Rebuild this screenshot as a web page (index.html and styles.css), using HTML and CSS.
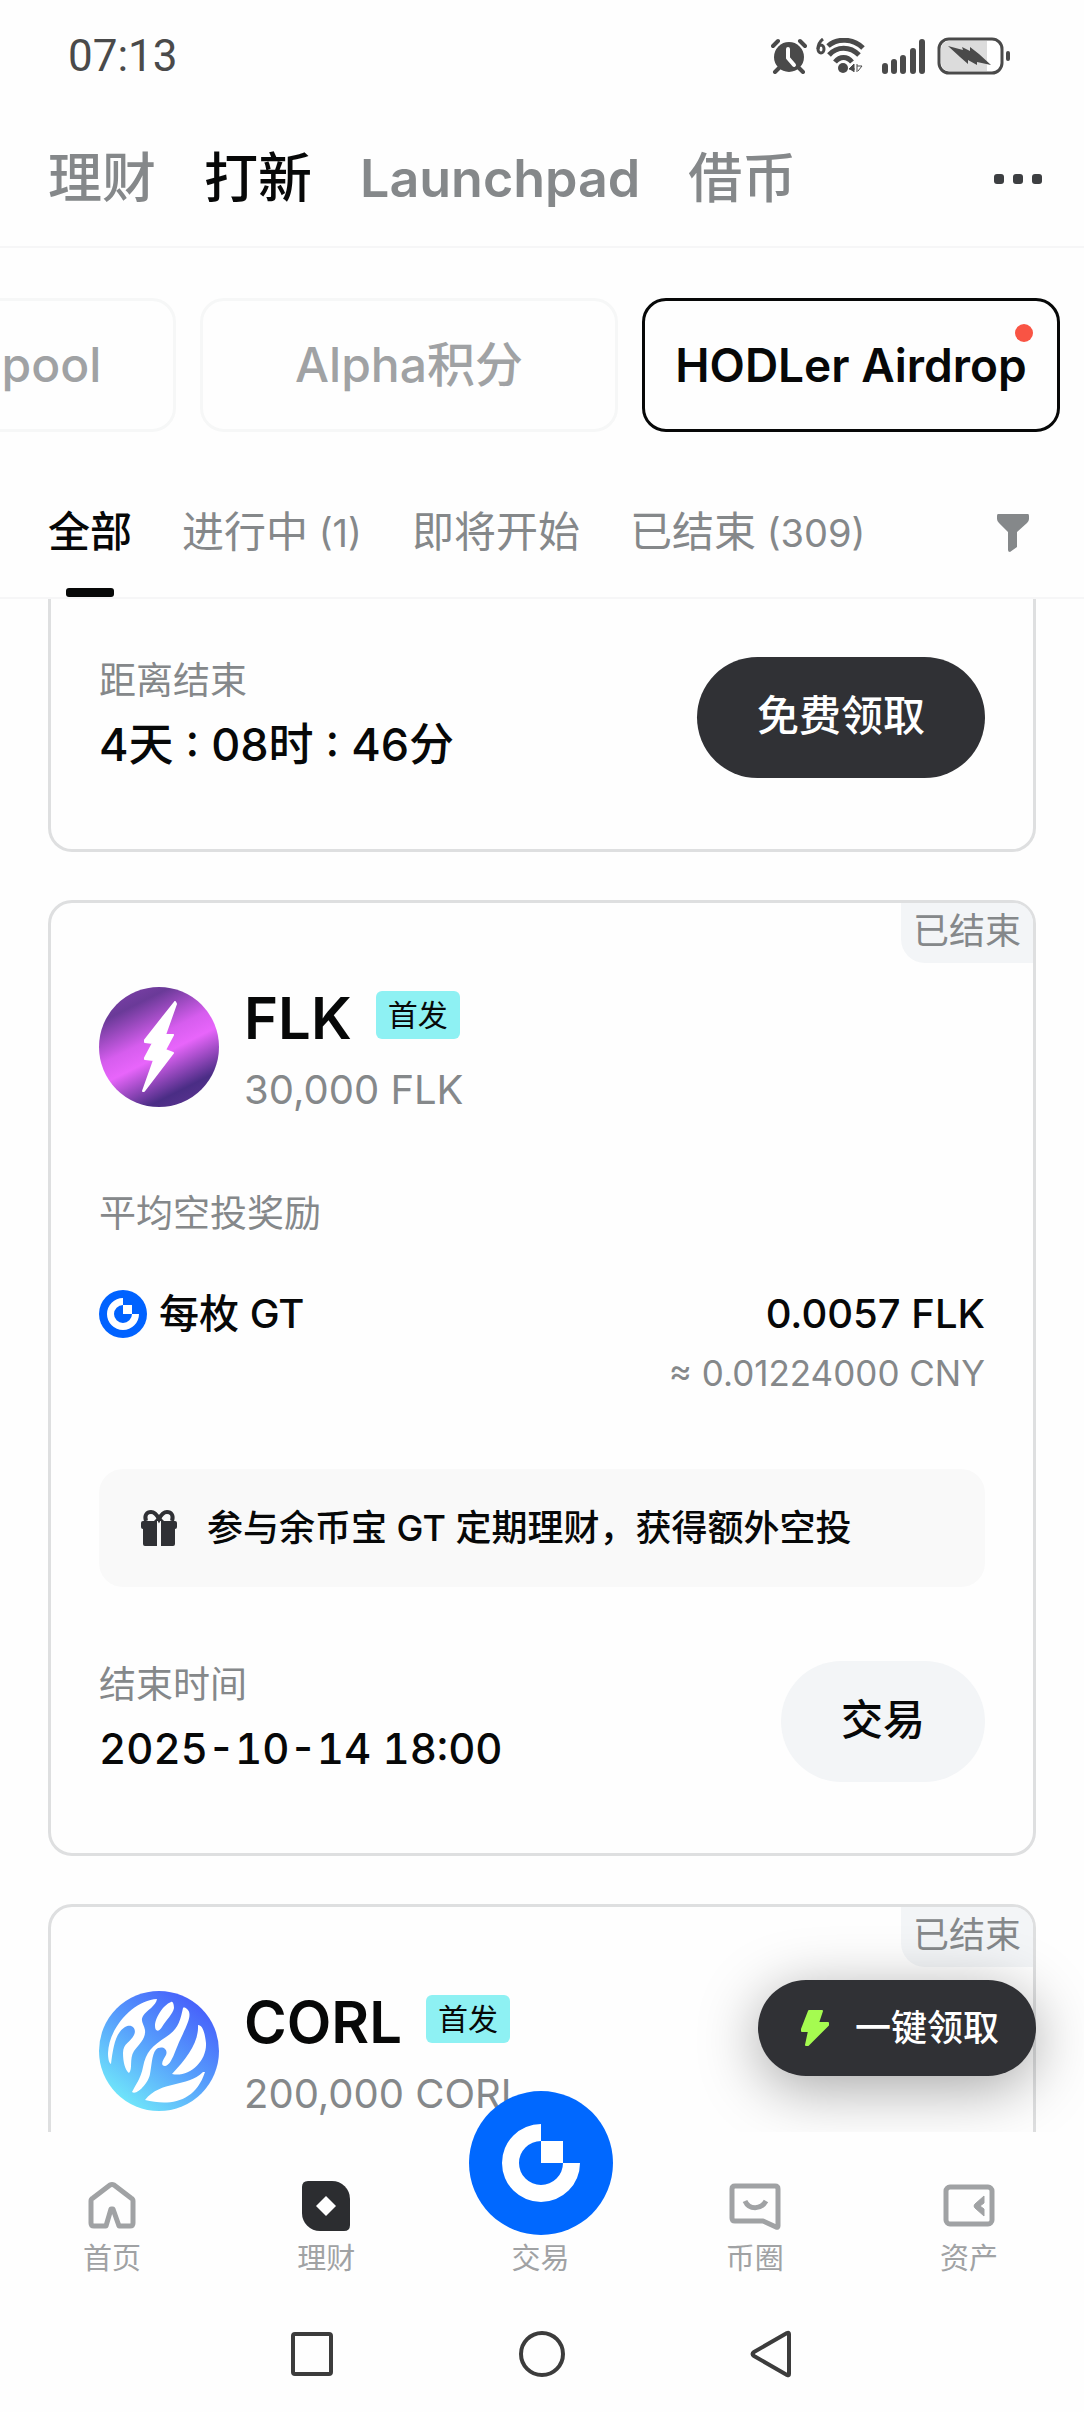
FILE: index.html
```html
<!DOCTYPE html>
<html lang="zh-CN">

<head>
  <meta charset="UTF-8" />
  <meta name="viewport" content="width=device-width, initial-scale=1.0" />
  <title>HODLer Airdrop</title>
  <link rel="stylesheet" href="styles.css">
</head>

<body>
  <div class="status-bar">
    <span class="time">07:13</span>
    <div class="status-icons">
      <svg width="36" height="36" viewBox="0 0 36 36">
        <circle cx="18" cy="19" r="15" fill="#4a4a4a" />
        <path d="M2 8l5-5M34 8l-5-5M8 30l-4 4M28 30l4 4" stroke="#4a4a4a" stroke-width="4" stroke-linecap="round" />
        <path d="M17 11v9l6 7" fill="none" stroke="#fff" stroke-width="4" stroke-linecap="round" stroke-linejoin="round" />
      </svg>
      <svg class="wifi" width="50" height="36" viewBox="0 0 50 36">
        <path d="M7 1C3 4 2 7 2 11" fill="none" stroke="#4a4a4a" stroke-width="3" />
        <ellipse cx="5" cy="11" rx="3" ry="4" fill="none" stroke="#4a4a4a" stroke-width="3" />
        <g fill="none" stroke="#4a4a4a" stroke-width="5">
          <path d="M12 8C21 0 37 0 47 10" />
          <path d="M13 17C21 8 34 8 43 17" />
          <path d="M19 24C24 18 31 18 36 24" />
        </g>
        <circle cx="27" cy="30" r="5" fill="#4a4a4a" />
        <path d="M33 31l5-5v8M33 31h6M41 26v8M46 28h-5M46 28l-4 5" fill="#4a4a4a" stroke="#4a4a4a" stroke-width="1" />
      </svg>
      <svg class="signal" width="44" height="36" viewBox="0 0 44 36">
        <path d="M3 28v5M12 24v9M21 20v13M31 13v20M40 4v29" stroke="#4a4a4a" stroke-width="6" stroke-linecap="round" />
      </svg>
      <svg class="battery" width="74" height="38" viewBox="0 0 74 38">
        <rect x="2" y="2" width="63" height="34" rx="10" fill="#fff" stroke="#4a4a4a" stroke-width="3" />
        <path d="M12 4h38v30H12a8 8 0 0 1-8-8V12a8 8 0 0 1 8-8z" fill="#dcdcdc" />
        <path d="M11 9l15 4-1-3 8 4v-4l9 7 12 11-14-3v3l-9-5v4l-8-7z" fill="#4a4a4a" />
        <rect x="69" y="14" width="4" height="10" rx="2" fill="#4a4a4a" />
      </svg>
    </div>
  </div>

  <header class="header">
    <nav class="main-tabs">
      <a href="#">理财</a>
      <a href="#" class="active">打新</a>
      <a href="#" class="latin">Launchpad</a>
      <a href="#">借币</a>
    </nav>
    <button class="more" aria-label="更多">
      <svg width="50" height="12" viewBox="0 0 50 12" fill="#3d3f42">
        <rect x="0" y="1" width="10" height="10" rx="3" />
        <rect x="19" y="1" width="10" height="10" rx="3" />
        <rect x="38" y="1" width="10" height="10" rx="3" />
      </svg>
    </button>
  </header>

  <div class="chips">
    <button class="chip">Launchpool</button>
    <button class="chip">Alpha积分</button>
    <button class="chip active">HODLer Airdrop<span class="dot"></span></button>
  </div>

  <div class="filters">
    <button class="filter active">全部</button>
    <button class="filter"><span>进行中<span class="count"> (1)</span></span></button>
    <button class="filter">即将开始</button>
    <button class="filter"><span>已结束<span class="count"> (309)</span></span></button>
    <button class="filter-icon" aria-label="筛选">
      <svg width="34" height="40" viewBox="0 0 34 40">
        <path d="M2 1h30q1 0 1 2v3q0 2-2 4L21 19v15l-7 5q-2 0-2-2V19L3 10Q1 8 1 6V3q0-2 1-2z" fill="#85888a" />
      </svg>
    </button>
  </div>

  <main class="list">
    <section class="card card-first">
      <div class="card-foot">
        <div class="period">
          <div class="label">距离结束</div>
          <div class="value">4天 : 08时 : 46分</div>
        </div>
        <button class="btn btn-dark">免费领取</button>
      </div>
    </section>

    <section class="card">
      <span class="badge">已结束</span>
      <div class="card-head">
        <svg width="120" height="120" viewBox="0 0 120 120">
          <defs>
            <linearGradient id="flk" x1="0.25" y1="0" x2="0.75" y2="1">
              <stop offset="0" stop-color="#7a3fa6" />
              <stop offset="0.14" stop-color="#6a3a98" />
              <stop offset="0.42" stop-color="#d65dee" />
              <stop offset="0.56" stop-color="#e865fb" />
              <stop offset="0.86" stop-color="#4a2d85" />
              <stop offset="1" stop-color="#59338f" />
            </linearGradient>
          </defs>
          <circle cx="60" cy="60" r="60" fill="url(#flk)" />
          <path d="M76 15L46 53v2l8 1-8 15v1l9 1-11 31h1l29-38-8-3 8-15h-8l11-31z" fill="#fff" stroke="#fff" stroke-width="2" stroke-linejoin="round" />
        </svg>
        <div>
          <div class="name-row">
            <h2>FLK</h2>
            <span class="tag">首发</span>
          </div>
          <div class="amount">30,000 FLK</div>
        </div>
      </div>

      <div class="label reward-label">平均空投奖励</div>
      <div class="reward">
        <div class="token">
          <svg width="48" height="48" viewBox="0 0 48 48">
            <circle cx="24" cy="24" r="24" fill="#0062ff" />
            <path d="M24 8a16 16 0 1 0 16 16h-7a9 9 0 1 1-9-9z" fill="#fff" />
            <path d="M24 15h9v9h-9z" fill="#fff" />
          </svg>
          每枚 GT
        </div>
        <div class="reward-value">0.0057 FLK</div>
      </div>
      <div class="fiat">≈ 0.01224000 CNY</div>

      <div class="notice">
        <svg width="36" height="36" viewBox="0 0 36 36">
          <path d="M5 11C3 5 6 2 10 2c4 0 6 3 8 7 2-4 4-7 8-7s7 3 5 9" fill="none" stroke="#303135" stroke-width="4" />
          <path d="M13 11l4-4h2l4 4" fill="#303135" />
          <path d="M2 11h14v25H4q-2 0-2-2V19q-2 0-2-2v-4q0-2 2-2zM20 11h14q2 0 2 2v4q0 2-2 2v15q0 2-2 2H20z" fill="#303135" />
        </svg>
        <span>参与余币宝 GT 定期理财，获得额外空投</span>
      </div>

      <div class="card-foot">
        <div class="period">
          <div class="label">结束时间</div>
          <div class="value date">2025-10-14 18:00</div>
        </div>
        <button class="btn btn-light">交易</button>
      </div>
    </section>

    <section class="card">
      <span class="badge">已结束</span>
      <div class="card-head">
        <svg width="120" height="120" viewBox="0 0 120 120">
          <defs>
            <linearGradient id="corl" x1="0.8" y1="0.1" x2="0.2" y2="0.9">
              <stop offset="0" stop-color="#4762fb" />
              <stop offset="0.5" stop-color="#579ffc" />
              <stop offset="1" stop-color="#6fe4fa" />
            </linearGradient>
          </defs>
          <circle cx="60" cy="60" r="60" fill="url(#corl)" />
          <g fill="#fff">
            <path d="M58 8C35 9 10 36 9 62c0 6 1 10 3 11 2-15 4-31 14-37 7-4 12 2 9 8-3 7-11 8-11 18 0 9 2 17 6 20 4-4 0-14 5-22 5-7 12-12 11-21-1-6-5-9-2-14 4-6 13-10 14-17z" />
            <path d="M72 11c-8 3-16 16-16 24 0 6 4 6 7 1 4-7 11-13 12-19 0-3-1-7-3-6z" />
            <path d="M84 17c-3 14-5 21-17 29-14 9-20 15-23 30-2 11-8 19-11 25 5 4 17-10 18-18 2-11 2-23 8-26 6-2 10 2 8 7-2 4-7 10-1 11 7-1 10-16 16-28 6-13 12-24 6-29-1-1-3-2-4-1z" />
            <path d="M99 34c1 17-11 33-26 49 16 4 35-12 34-31-1-9-3-18-8-18z" />
            <path d="M104 81C88 97 62 89 46 109c24 6 50 3 60-28z" />
          </g>
        </svg>
        <div>
          <div class="name-row">
            <h2>CORL</h2>
            <span class="tag">首发</span>
          </div>
          <div class="amount">200,000 CORL</div>
        </div>
      </div>
    </section>

    <button class="claim-all">
      <svg width="28" height="36" viewBox="0 0 28 36">
        <path d="M8 1h13l-4 12h10v2L7 35H5l3-14H1v-2z" fill="#a5fb50" stroke="#a5fb50" stroke-width="2" stroke-linejoin="round" />
      </svg>
      一键领取
    </button>
  </main>

  <nav class="tabbar">
    <a href="#">
      <svg width="52" height="52" viewBox="0 0 52 52">
        <path d="M20 46H8q-3 0-3-3V21q0-2 2-3L24 5q2-1 4 0l17 13q2 1 2 3v22q0 3-3 3H33L27 29h-2z" fill="none" stroke="#a0a2a4" stroke-width="5" stroke-linejoin="round" />
      </svg>
      首页
    </a>
    <a href="#">
      <svg width="52" height="52" viewBox="0 0 52 52">
        <path d="M8 1h24a18 18 0 0 1 18 18v26q0 6-6 6H20A18 18 0 0 1 2 33V7q0-6 6-6z" fill="#2c2d30" />
        <path d="M26 16l10 10-10 10-10-10z" fill="#fff" />
      </svg>
      理财
    </a>
    <a href="#">
      <svg class="trade" width="144" height="144" viewBox="0 0 144 144">
        <circle cx="72" cy="72" r="72" fill="#0068ff" />
        <path d="M72 33a39 39 0 1 0 39 39H94a22 22 0 1 1-22-22z" fill="#fff" />
        <path d="M72 50h22v22H72z" fill="#fff" />
      </svg>
      交易
    </a>
    <a href="#">
      <svg width="52" height="52" viewBox="0 0 52 52">
        <path d="M6 6h40q3 0 3 3v37q0 2-2 1L34 41H6q-3 0-3-3V9q0-3 3-3z" fill="none" stroke="#a0a2a4" stroke-width="5" stroke-linejoin="round" />
        <path d="M16 21c4 9 16 9 21 0" fill="none" stroke="#a0a2a4" stroke-width="5" />
      </svg>
      币圈
    </a>
    <a href="#">
      <svg width="52" height="52" viewBox="0 0 52 52">
        <rect x="3" y="7" width="46" height="37" rx="4" fill="none" stroke="#a0a2a4" stroke-width="5" />
        <path d="M41 16v7l-4 3 4 3v7l-9-8q-2-2 0-4z" fill="#a0a2a4" stroke="#a0a2a4" stroke-width="1" />
      </svg>
      资产
    </a>
  </nav>

  <div class="system-nav">
    <button aria-label="最近任务">
      <svg width="52" height="52" viewBox="0 0 52 52">
        <rect x="7" y="6" width="38" height="40" rx="2" fill="none" stroke="#3c3c3c" stroke-width="4" />
      </svg>
    </button>
    <button aria-label="主屏幕">
      <svg width="52" height="52" viewBox="0 0 52 52">
        <circle cx="26" cy="26" r="21" fill="none" stroke="#3c3c3c" stroke-width="4" />
      </svg>
    </button>
    <button aria-label="返回">
      <svg width="52" height="52" viewBox="0 0 52 52">
        <path d="M43 6v40q0 2-2 1L8 28q-3-2 0-4L41 5q2-1 2 1z" fill="none" stroke="#3c3c3c" stroke-width="4" stroke-linejoin="round" />
      </svg>
    </button>
  </div>
</body>

</html>
```
FILE: styles.css
```css
* {
  box-sizing: border-box;
}

body {
  margin: 0;
  height: 100vh;
  display: flex;
  flex-direction: column;
  background: #fefefe;
  color: #070808;
  font-family: Inter, "Noto Sans CJK SC", sans-serif;
}

button {
  padding: 0;
  border: none;
  background: none;
  color: inherit;
  font: inherit;
  white-space: nowrap;
  cursor: pointer;
}

a {
  color: inherit;
  text-decoration: none;
}

svg {
  display: block;
  flex: none;
}

/* status bar */
.status-bar {
  display: flex;
  align-items: center;
  justify-content: space-between;
  height: 112px;
  padding: 0 73px 0 68px;
}

.time {
  font-family: Roboto, sans-serif;
  font-size: 44px;
  line-height: 56px;
  color: #4a4a4a;
}

.status-icons {
  display: flex;
  align-items: center;
}

.wifi {
  margin-left: 9px;
}

.signal {
  margin-left: 16px;
}

.battery {
  margin-left: 11px;
}

/* header */
.header {
  display: flex;
  align-items: center;
  justify-content: space-between;
  padding: 35px 40px 35px 48px;
  border-bottom: 2px solid #f6f6f7;
}

.main-tabs {
  display: flex;
  gap: 48px;
  font-size: 54px;
  line-height: 64px;
  font-weight: 500;
  color: #85888a;
}

.main-tabs .active {
  color: #070808;
}

.main-tabs .latin {
  font-size: 52px;
  font-weight: 600;
}

/* product chips */
.chips {
  display: flex;
  justify-content: flex-end;
  gap: 24px;
  padding: 50px 24px 70px;
  overflow: hidden;
}

.chip {
  position: relative;
  flex: 0 0 418px;
  height: 134px;
  border: 3px solid #f6f7f7;
  border-radius: 24px;
  font-size: 48px;
  line-height: 60px;
  font-weight: 500;
  color: #a0a2a4;
}

.chip.active {
  border-color: #070808;
  color: #070808;
  font-size: 46px;
  font-weight: 600;
}

.dot {
  position: absolute;
  top: 23px;
  right: 24px;
  width: 18px;
  height: 18px;
  border-radius: 50%;
  background: #f95444;
}

/* status filters */
.filters {
  display: flex;
  align-items: flex-start;
  gap: 50px;
  padding: 0 54px 0 48px;
  border-bottom: 2px solid #f6f6f7;
}

.filter {
  display: flex;
  flex-direction: column;
  align-items: center;
  gap: 26px;
  font-size: 42px;
  line-height: 60px;
  color: #85888a;
}

.count {
  font-size: 38px;
}

.filter.active {
  color: #070808;
  font-weight: 500;
}

.filter.active::after {
  content: "";
  width: 48px;
  height: 9px;
  border-radius: 3px;
  background: #070808;
}

.filter-icon {
  margin: 11px 0 0 auto;
}

/* project cards */
.list {
  position: relative;
  flex: 1;
  min-height: 0;
  overflow: hidden;
  display: flex;
  flex-direction: column;
  gap: 48px;
  padding: 0 48px;
}

.card {
  position: relative;
  flex: none;
  padding: 84px 48px 71px;
  border: 3px solid #dedfe0;
  border-radius: 24px;
}

.card-first {
  padding-top: 58px;
  border-top: none;
  border-radius: 0 0 24px 24px;
}

.badge {
  position: absolute;
  top: 0;
  right: 0;
  padding: 0 12px 4px;
  border-radius: 0 20px 0 24px;
  background: #f3f5f7;
  color: #85888a;
  font-size: 36px;
  line-height: 56px;
}

.card-head {
  display: flex;
  gap: 25px;
}

.name-row {
  display: flex;
  gap: 24px;
}

h2 {
  margin: 0;
  font-size: 58px;
  line-height: 62px;
  font-weight: 600;
}

.tag {
  height: 48px;
  margin-top: 4px;
  padding: 0 12px;
  border-radius: 6px;
  background: #8ef1f3;
  font-size: 30px;
  line-height: 48px;
}

.amount {
  margin-top: 15px;
  font-size: 40px;
  line-height: 52px;
  color: #85888a;
}

.label {
  font-size: 37px;
  line-height: 48px;
  color: #85888a;
}

.reward-label {
  margin-top: 74px;
}

.reward {
  display: flex;
  justify-content: space-between;
  margin-top: 48px;
  font-size: 40px;
  line-height: 56px;
  font-weight: 500;
}

.token {
  display: flex;
  align-items: center;
  gap: 12px;
}

.fiat {
  margin-top: 9px;
  font-size: 35px;
  line-height: 44px;
  text-align: right;
  color: #85888a;
}

.notice {
  display: flex;
  align-items: center;
  gap: 30px;
  margin: 74px 0;
  padding: 35px 42px;
  border-radius: 24px;
  background: #f9f9f9;
  font-size: 36px;
  line-height: 48px;
  font-weight: 500;
}

.card-foot {
  display: flex;
  align-items: flex-start;
  justify-content: space-between;
}

.value {
  margin-top: 10px;
  font-size: 45px;
  line-height: 60px;
  font-weight: 500;
}

.date {
  font-size: 42px;
  font-variant-numeric: tabular-nums;
}

.btn {
  height: 121px;
  padding: 0 60px 4px;
  border-radius: 61px;
  font-size: 42px;
  line-height: 60px;
  font-weight: 500;
}

.btn-dark {
  background: #303135;
  color: #fff;
}

.btn-light {
  background: #f3f5f7;
}

.claim-all {
  position: absolute;
  right: 48px;
  bottom: 56px;
  display: flex;
  align-items: center;
  gap: 26px;
  height: 96px;
  padding: 0 37px 0 43px;
  border-radius: 48px;
  background: #303135;
  box-shadow: 0 12px 60px rgba(0, 0, 0, 0.35);
  color: #fff;
  font-size: 36px;
  line-height: 48px;
  font-weight: 500;
}

/* bottom tabs */
.tabbar {
  position: relative;
  display: flex;
  padding: 48px 8px 0 5px;
}

.tabbar a {
  flex: 1;
  display: flex;
  flex-direction: column;
  align-items: center;
  justify-content: flex-end;
  gap: 8px;
  font-size: 29px;
  line-height: 38px;
  color: #a0a2a4;
}

/* round button sticks out above the bar */
.trade {
  position: absolute;
  top: -41px;
}

.system-nav {
  display: flex;
  justify-content: center;
  gap: 178px;
  padding: 50px 0 32px;
}
```
